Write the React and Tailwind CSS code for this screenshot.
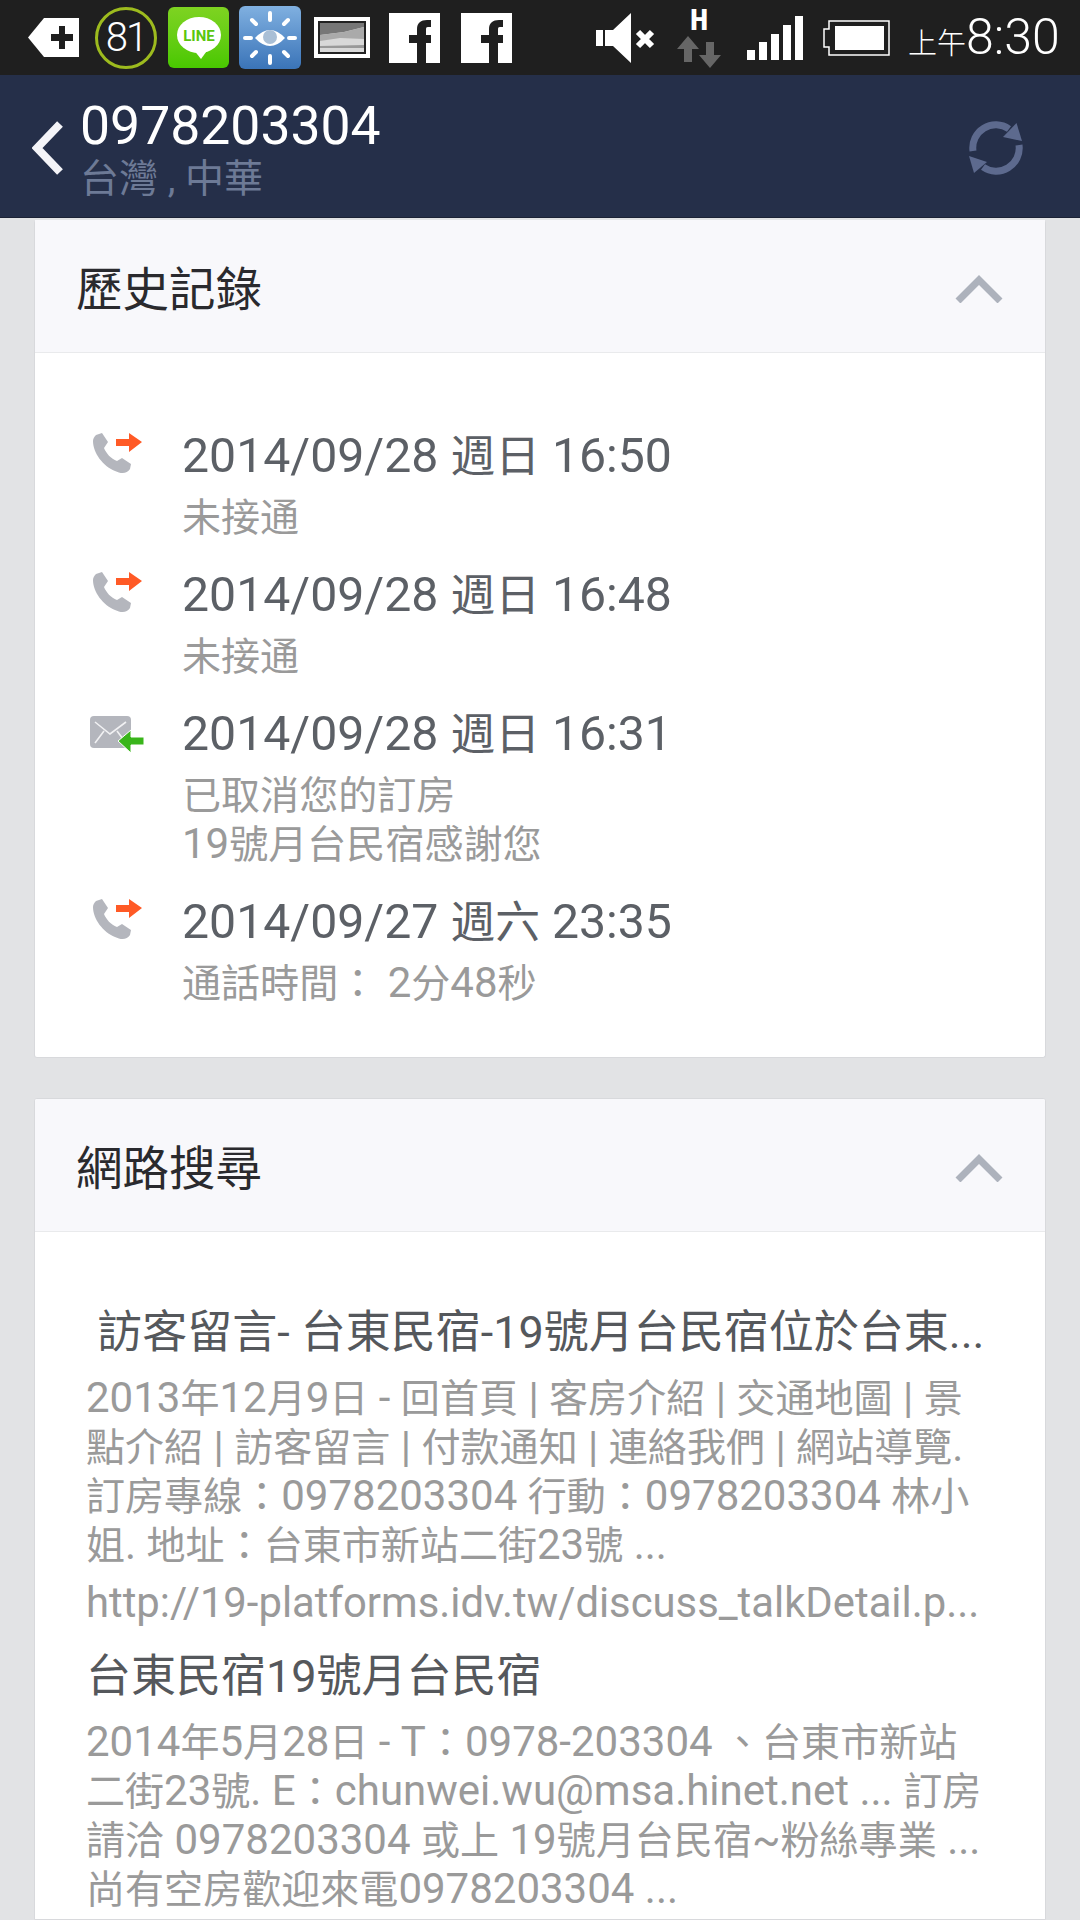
const FONT = "font-['Roboto','Noto_Sans_CJK_SC',sans-serif]";

// The phone's CJK fallback runs a bit smaller than Roboto, so CJK runs get their own size
const MixedText = ({ text }) =>
  text.split(/([：、])|([\u3000-\u9fff]+)/).map((part, i) => {
    if (!part) return null;
    if (part === '：' || part === '、') {
      return <span key={i} className="font-['Noto_Sans_CJK_TC',sans-serif] text-[0.93em] leading-none">{part}</span>;
    }
    if (/[\u3000-\u9fff]/.test(part)) {
      return <span key={i} className="text-[0.93em] leading-none">{part}</span>;
    }
    return <span key={i}>{part}</span>;
  });

const PlusTag = () => (
  <svg width="51" height="39" viewBox="0 0 51 39" className="ml-[28px] shrink-0">
    <path d="M0 19.5 L16 0 H51 V39 H16 Z" fill="#fff" />
    <path d="M23 16 H31 V8 H37 V16 H45 V23 H37 V31 H31 V23 H23 Z" fill="#1f1f1f" />
  </svg>
);

const BatteryRing = () => (
  <div className="ml-[16px] flex h-[62px] w-[62px] shrink-0 items-center justify-center rounded-full border-[3px] border-[#9dbb1e] text-[40px] font-light tracking-[-2px] text-white">
    81
  </div>
);

const LineIcon = () => (
  <div className="ml-[11px] flex h-[61px] w-[61px] shrink-0 items-center justify-center rounded-[6px] bg-gradient-to-b from-[#7ed321] to-[#48c800]">
    <svg width="44" height="44" viewBox="0 0 44 44">
      <ellipse cx="22" cy="19" rx="22" ry="18" fill="#fff" />
      <path d="M16 33 L24 43 L32 32 Z" fill="#fff" />
      <text x="22" y="25" textAnchor="middle" fontSize="15" fontWeight="700" fill="#5ac60e" fontFamily="Roboto, sans-serif">LINE</text>
    </svg>
  </div>
);

const EyeIcon = () => (
  <div className="ml-[10px] flex h-[63px] w-[62px] shrink-0 items-center justify-center rounded-[6px] bg-gradient-to-b from-[#80b0e0] to-[#3a74b8]">
    <svg width="56" height="56" viewBox="0 0 56 56">
      <g stroke="#fff" strokeWidth="4" strokeLinecap="round">
        <path d="M28 3V10M28 46V53M3 28H9M47 28H53M10 10L14 14M46 10L42 14M10 46L14 42M46 46L42 42" />
      </g>
      <path d="M13 28 Q28 12 43 28 Q28 44 13 28 Z" fill="#fff" />
      <circle cx="28" cy="27" r="7" fill="#a9bfd6" />
    </svg>
  </div>
);

const ChartIcon = () => (
  <svg width="56" height="41" viewBox="0 0 56 41" className="ml-[13px] shrink-0">
    <rect width="56" height="41" fill="#fff" />
    <rect x="4" y="4" width="48" height="33" fill="#222" />
    <rect x="6" y="6" width="44" height="29" fill="#d8d8d8" />
    <path d="M6 6H50V10L30 15L6 18Z" fill="#777" />
    <path d="M6 18L30 15L50 10V22L26 21L6 24Z" fill="#aaa" />
    <path d="M6 29L50 28V31H6Z" fill="#999" />
  </svg>
);

const FacebookIcon = ({ className }) => (
  <svg width="51" height="50" viewBox="0 0 51 50" className={className}>
    <rect width="51" height="50" fill="#fff" />
    <path d="M28 50V30H20V22H28V16C28 10 32 7 38 7H42V14H39C37 14 37 15 37 17V22H42V30H37V50Z" fill="#1f1f1f" />
  </svg>
);

const Speaker = () => (
  <svg width="60" height="50" viewBox="0 0 60 50" className="shrink-0">
    <path d="M0 17H7V33H0ZM9 17H17L35 0V50L17 33H9Z" fill="#fff" />
    <path d="M42 19L56 33M56 19L42 33" stroke="#fff" strokeWidth="6" />
  </svg>
);

const NetworkIcon = () => (
  <div className="ml-[21px] flex h-[60px] w-[44px] shrink-0 flex-col items-center">
    <span className="font-['Liberation_Mono',monospace] text-[32px] leading-[28px] font-bold text-white">H</span>
    <svg width="44" height="32" viewBox="0 0 44 32">
      <path d="M11 0L22 13H15V26H7V13H0Z" fill="#666" />
      <path d="M29 6H37V19H44L33 32L22 19H29Z" fill="#666" />
    </svg>
  </div>
);

const Signal = () => (
  <div className="ml-[26px] flex h-[44px] shrink-0 items-end gap-[4px]">
    <div className="h-[10px] w-[8px] bg-white" />
    <div className="h-[18px] w-[8px] bg-white" />
    <div className="h-[26px] w-[8px] bg-white" />
    <div className="h-[35px] w-[8px] bg-white" />
    <div className="h-[44px] w-[8px] bg-white" />
  </div>
);

const Battery = () => (
  <svg width="67" height="36" viewBox="0 0 67 36" className="ml-[20px] shrink-0">
    <path d="M6 1H66V35H6V27H1V9H6Z" fill="none" stroke="#fff" strokeWidth="1.5" />
    <rect x="12" y="6" width="49" height="24" fill="#fff" />
  </svg>
);

const StatusBar = () => (
  <div className={`flex h-[75px] shrink-0 items-center bg-[#1f1f1f] ${FONT}`}>
    <PlusTag />
    <BatteryRing />
    <LineIcon />
    <EyeIcon />
    <ChartIcon />
    <FacebookIcon className="ml-[19px] shrink-0" />
    <FacebookIcon className="ml-[21px] shrink-0" />
    <div className="ml-[84px] flex items-center">
      <Speaker />
      <NetworkIcon />
      <Signal />
      <Battery />
    </div>
    <div className="ml-[18px] flex items-baseline text-white">
      <span className="text-[29px] font-light">上午</span>
      <span className="text-[50px] leading-[56px] font-light">8:30</span>
    </div>
  </div>
);

const BackIcon = () => (
  <svg width="32" height="56" viewBox="0 0 32 56" className="ml-[32px] mt-[4px] shrink-0">
    <path d="M28 4 L5 28 L28 52" fill="none" stroke="#f4f4f8" strokeWidth="8" />
  </svg>
);

const RefreshIcon = () => (
  <svg width="54" height="54" viewBox="0 0 54 54" className="mt-[3px] shrink-0">
    <g fill="none" stroke="#5d6a8e" strokeWidth="7">
      <path d="M4 30 A23 23 0 0 1 40 8" />
      <path d="M50 24 A23 23 0 0 1 14 46" />
    </g>
    <path d="M47.5 2 L53 20 L34 16 Z" fill="#5d6a8e" />
    <path d="M5 52 L0 35 L18 41 Z" fill="#5d6a8e" />
  </svg>
);

const Header = () => (
  <div className={`flex h-[143px] shrink-0 items-center border-b border-[#1b2235] bg-[#252f49] pr-[57px] ${FONT}`}>
    <BackIcon />
    <div className="ml-[16px] mt-[5px] flex-1">
      <div className="text-[53.5px] leading-[56px] text-white">0978203304</div>
      <div className="mt-[5px] text-[39px] leading-[40px] text-[#6d7a96]">台灣 , 中華</div>
    </div>
    <RefreshIcon />
  </div>
);

const ChevronIcon = () => (
  <svg width="48" height="28" viewBox="0 0 48 28" className="mt-[5px] shrink-0">
    <path d="M3 26 L24 5 L45 26" fill="none" stroke="#adb2bc" strokeWidth="7" />
  </svg>
);

const CardHeader = ({ title }) => (
  <div className="flex h-[133px] items-center justify-between border-b border-[#e9eaec] bg-[#f8f8fb] pl-[41px] pr-[42px]">
    <span className="mt-[10px] text-[46.5px] text-[#2a2a2e]">{title}</span>
    <ChevronIcon />
  </div>
);

const CallIcon = () => (
  <svg width="50" height="42" viewBox="0 0 50 42" className="mt-[6px] shrink-0">
    <path d="M3 3 L9 1 L15 10 L11 16 C13 21 18 27 24 29 L29 26 L38 32 L37 37 C34 42 28 42 22 39 C10 34 0 21 0 9 C0 7 1 5 3 3 Z" fill="#b4b6bd" />
    <path d="M23 7H36V1L49 10L36 20V14H23Z" fill="#ff5a26" />
  </svg>
);

const MailIcon = () => (
  <svg width="54" height="38" viewBox="0 0 54 38" className="-ml-[3px] mt-[12px] shrink-0">
    <rect x="0" y="0" width="41" height="32" rx="4" fill="#b4b6bd" />
    <path d="M5 6 L20 18 L36 6 M5 27 L14 15 M36 27 L27 15" fill="none" stroke="#f1f1f3" strokeWidth="1.6" />
    <path d="M54 21H41V14L28 25L41 37V29H54Z" fill="#39b51a" stroke="#fff" strokeWidth="1" />
  </svg>
);

const historyRows = [
  { icon: 'call', title: '2014/09/28 週日 16:50', lines: ['未接通'] },
  { icon: 'call', title: '2014/09/28 週日 16:48', lines: ['未接通'] },
  { icon: 'mail', title: '2014/09/28 週日 16:31', lines: ['已取消您的訂房', '19號月台民宿感謝您'] },
  { icon: 'call', title: '2014/09/27 週六 23:35', lines: ['通話時間： 2分48秒'] },
];

const searchResults = [
  {
    title: '\u00a0訪客留言- 台東民宿-19號月台民宿位於台東...',
    lines: [
      '2013年12月9日 - 回首頁 | 客房介紹 | 交通地圖 | 景',
      '點介紹 | 訪客留言 | 付款通知 | 連絡我們 | 網站導覽.',
      '訂房專線：0978203304 行動：0978203304 林小',
      '姐. 地址：台東市新站二街23號 ...',
    ],
    url: 'http://19-platforms.idv.tw/discuss_talkDetail.p...',
  },
  {
    title: '台東民宿19號月台民宿',
    lines: [
      '2014年5月28日 - T：0978-203304 、台東市新站',
      '二街23號. E：chunwei.wu@msa.hinet.net ... 訂房',
      '請洽 0978203304 或上 19號月台民宿~粉絲專業 ...',
      '尚有空房歡迎來電0978203304 ...',
    ],
  },
];

export default function App() {
  return (
    <div className={`flex h-[1920px] w-[1080px] flex-col overflow-hidden bg-[#e2e3e5] ${FONT}`}>
      <StatusBar />
      <Header />
      <div className="mx-[34px] mt-[2px] shrink-0 rounded-[3px] border border-t-0 border-[#d8d9dc] bg-white">
        <CardHeader title="歷史記錄" />
        <div className="flex flex-col gap-[24px] pb-[50px] pl-[58px] pt-[73px]">
          {historyRows.map((row) => (
            <div key={row.title} className="flex">
              <div className="w-[89px] shrink-0">{row.icon === 'call' ? <CallIcon /> : <MailIcon />}</div>
              <div>
                <div className="text-[48.2px] leading-[60px] text-[#5c6066]"><MixedText text={row.title} /></div>
                <div className="mt-[6px]">
                  {row.lines.map((line) => (
                    <div key={line} className="text-[42px] leading-[49px] text-[#9a9a9a]"><MixedText text={line} /></div>
                  ))}
                </div>
              </div>
            </div>
          ))}
        </div>
      </div>
      <div className="mx-[34px] mt-[40px] min-h-0 flex-1 overflow-hidden rounded-t-[3px] border border-[#d8d9dc] bg-white">
        <CardHeader title="網路搜尋" />
        <div className="flex flex-col gap-[21px] pl-[51px] pt-[73px]">
          {searchResults.map((result) => (
            <div key={result.title}>
              <div className="whitespace-nowrap text-[45px] leading-[56px] text-[#55585c]">{result.title}</div>
              <div className="mt-[12px]">
                {result.lines.map((line) => (
                  <div key={line} className="whitespace-nowrap text-[42px] leading-[49px] text-[#9a9a9a]"><MixedText text={line} /></div>
                ))}
              </div>
              {result.url && (
                <div className="mt-[9px] whitespace-nowrap text-[41.8px] leading-[50px] text-[#9a9a9a]">{result.url}</div>
              )}
            </div>
          ))}
        </div>
      </div>
    </div>
  );
}
